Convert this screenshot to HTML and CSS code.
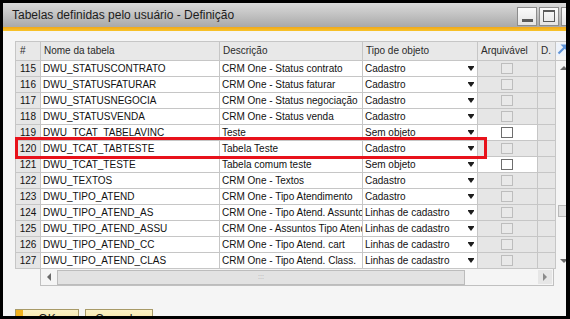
FILE: index.html
```html
<!DOCTYPE html>
<html lang="pt">
<head>
    <meta charset="UTF-8">
    <title>Tabelas definidas pelo usuário - Definição</title>
    <link rel="stylesheet" href="styles.css">
</head>
<body>
    <div class="window">
        <div class="titlebar">
            <span class="title">Tabelas definidas pelo usuário - Definição</span>
            <div class="winbtns">
                <span class="winbtn"><span class="min-glyph"></span></span>
                <span class="winbtn"><span class="max-glyph"></span></span>
                <span class="winbtn close">x</span>
            </div>
        </div>
        <div class="accent"></div>

        <div class="content">
            <div class="gridwrap">
                <div class="grid">
                    <div class="hd">#</div>
                    <div class="hd">Nome da tabela</div>
                    <div class="hd">Descrição</div>
                    <div class="hd">Tipo de objeto</div>
                    <div class="hd">Arquivável</div>
                    <div class="hd">D.</div>
                    <div class="hd expand">
                        <svg width="13" height="13" viewBox="0 0 13 13">
                            <rect x="0" y="0" width="13" height="13" fill="#eef3fa"/>
                            <path d="M2.5 10.5 L9 4" stroke="#5f93d6" stroke-width="2.2" fill="none"/>
                            <path d="M4.5 1.5 H11.5 V8.5 Z" fill="#5f93d6"/>
                        </svg>
                    </div>

                    <div class="vscroll">
                        <span class="tri up"></span>
                        <span class="vthumb"></span>
                        <span class="tri down"></span>
                    </div>

                    <div class="num">115</div><div class="cell">DWU_STATUSCONTRATO</div><div class="cell">CRM One - Status contrato</div><div class="cell type">Cadastro<span class="drop"></span></div><div class="arq"><span class="chk"></span></div><div class="dcol"></div>
                    <div class="num">116</div><div class="cell">DWU_STATUSFATURAR</div><div class="cell">CRM One - Status faturar</div><div class="cell type">Cadastro<span class="drop"></span></div><div class="arq"><span class="chk"></span></div><div class="dcol"></div>
                    <div class="num">117</div><div class="cell">DWU_STATUSNEGOCIA</div><div class="cell">CRM One - Status negociação</div><div class="cell type">Cadastro<span class="drop"></span></div><div class="arq"><span class="chk"></span></div><div class="dcol"></div>
                    <div class="num">118</div><div class="cell">DWU_STATUSVENDA</div><div class="cell">CRM One - Status venda</div><div class="cell type">Cadastro<span class="drop"></span></div><div class="arq"><span class="chk"></span></div><div class="dcol"></div>
                    <div class="num">119</div><div class="cell">DWU_TCAT_TABELAVINC</div><div class="cell">Teste</div><div class="cell type">Sem objeto<span class="drop"></span></div><div class="arq on"><span class="chk"></span></div><div class="dcol"></div>
                    <div class="num">120</div><div class="cell">DWU_TCAT_TABTESTE</div><div class="cell">Tabela Teste</div><div class="cell type">Cadastro<span class="drop"></span></div><div class="arq"><span class="chk"></span></div><div class="dcol"></div>
                    <div class="num">121</div><div class="cell">DWU_TCAT_TESTE</div><div class="cell">Tabela comum teste</div><div class="cell type">Sem objeto<span class="drop"></span></div><div class="arq on"><span class="chk"></span></div><div class="dcol"></div>
                    <div class="num">122</div><div class="cell">DWU_TEXTOS</div><div class="cell">CRM One - Textos</div><div class="cell type">Cadastro<span class="drop"></span></div><div class="arq"><span class="chk"></span></div><div class="dcol"></div>
                    <div class="num">123</div><div class="cell">DWU_TIPO_ATEND</div><div class="cell">CRM One - Tipo Atendimento</div><div class="cell type">Cadastro<span class="drop"></span></div><div class="arq"><span class="chk"></span></div><div class="dcol"></div>
                    <div class="num">124</div><div class="cell">DWU_TIPO_ATEND_AS</div><div class="cell">CRM One - Tipo Atend. Assuntos</div><div class="cell type">Linhas de cadastro<span class="drop"></span></div><div class="arq"><span class="chk"></span></div><div class="dcol"></div>
                    <div class="num">125</div><div class="cell">DWU_TIPO_ATEND_ASSU</div><div class="cell">CRM One - Assuntos Tipo Atend.</div><div class="cell type">Linhas de cadastro<span class="drop"></span></div><div class="arq"><span class="chk"></span></div><div class="dcol"></div>
                    <div class="num">126</div><div class="cell">DWU_TIPO_ATEND_CC</div><div class="cell">CRM One - Tipo Atend. cart</div><div class="cell type">Linhas de cadastro<span class="drop"></span></div><div class="arq"><span class="chk"></span></div><div class="dcol"></div>
                    <div class="num">127</div><div class="cell">DWU_TIPO_ATEND_CLAS</div><div class="cell">CRM One - Tipo Atend. Class.</div><div class="cell type">Linhas de cadastro<span class="drop"></span></div><div class="arq"><span class="chk"></span></div><div class="dcol"></div>
                </div>

                <!-- highlight drawn over row 120 -->
                <div class="mark"></div>

                <div class="hrow">
                    <div class="hscroll">
                        <span class="harrow"><span class="tri left"></span></span>
                        <span class="hthumb"><span class="grip">:::</span></span>
                        <span class="htrack"></span>
                        <span class="harrow right-box"><span class="tri right"></span></span>
                    </div>
                </div>
            </div>

            <div class="footer">
                <button class="btn ok">OK</button>
                <button class="btn">Cancelar</button>
            </div>
        </div>
    </div>
</body>
</html>
```

FILE: styles.css
```css
body {
    margin: 0;
    background-color: #000;
    font-family: "Liberation Sans", Arial, sans-serif;
    color: #111;
}
.window {
    margin: 3px 4px 0 3px;
    height: 313px;
    overflow: hidden;
    background-color: #f5f5f5;
}
.titlebar {
    display: flex;
    align-items: flex-start;
    height: 24px;
    background: linear-gradient(#dadada, #a9a9a9);
}
.title {
    flex: 1;
    padding-left: 9px;
    font-size: 12px;
    line-height: 24px;
    color: #1c1c1c;
    white-space: nowrap;
}
.winbtns {
    display: flex;
    gap: 2px;
    margin-top: 4px;
    margin-right: -15px;
}
.winbtn {
    display: flex;
    justify-content: center;
    width: 20px;
    height: 19px;
    box-sizing: border-box;
    border: 1px solid #8c8c8c;
    background: linear-gradient(#fbfbfb, #e4e4e4);
    font-size: 13px;
    line-height: 16px;
    color: #555;
}
.min-glyph {
    margin-top: 11px;
    width: 11px;
    height: 3px;
    background-color: #5a5a5a;
}
.max-glyph {
    margin-top: 2px;
    width: 12px;
    height: 12px;
    box-sizing: border-box;
    border: 1px solid #5a5a5a;
    border-top-width: 2px;
}
.accent {
    height: 4px;
    background: linear-gradient(#f0a81a, #f8c42a);
}
.content {
    padding: 10px 0 0 12px;
}
.gridwrap {
    position: relative;
}
.grid {
    display: grid;
    grid-template-columns: 25px 179px 143px 115px 60px 18px 16px;
    grid-template-rows: 19px;
    grid-auto-rows: 16px;
    width: max-content;
    border-left: 1px solid #c6c6c6;
    border-top: 1px solid #c6c6c6;
    font-size: 10px;
}
.grid > div {
    box-sizing: border-box;
    border-right: 1px solid #c6c6c6;
    border-bottom: 1px solid #c6c6c6;
    white-space: nowrap;
    overflow: hidden;
}
.hd {
    background-color: #e8e8e8;
    padding: 0 3px;
    line-height: 18px;
    color: #2a2a2a;
}
.hd:first-child {
    padding-left: 4px;
}
.grid > .expand {
    padding: 1px 0 0 0;
    border-right: none;
    background-color: #f5f5f5;
}
.num {
    background-color: #e6e6e6;
    text-align: center;
    line-height: 15px;
}
.cell {
    background-color: #fff;
    padding: 0 2px;
    line-height: 15px;
}
.type {
    display: flex;
    align-items: center;
    justify-content: space-between;
    padding-right: 3px;
}
.drop {
    width: 0;
    height: 0;
    border-left: 3.5px solid transparent;
    border-right: 3.5px solid transparent;
    border-top: 4px solid #1e1e1e;
    box-shadow: 0 -1px 0 #1e1e1e;
}
.arq {
    display: flex;
    justify-content: center;
    align-items: center;
    background-color: #e6e6e6;
}
.arq.on {
    background-color: #fff;
}
.chk {
    width: 12px;
    height: 11px;
    box-sizing: border-box;
    border: 1px solid #bdbdbd;
    background-color: #e9e9e9;
    margin-right: 2px;
}
.arq.on .chk {
    border-color: #6e6e6e;
    background-color: #fff;
}
.dcol {
    background-color: #e6e6e6;
}
.grid > .vscroll {
    grid-column: 7;
    grid-row: 2 / span 13;
    display: flex;
    flex-direction: column;
    align-items: center;
    border-right: none;
    border-bottom: none;
    background-color: #f5f5f5;
}
.tri {
    width: 0;
    height: 0;
}
.tri.up {
    margin-top: 5px;
    border-left: 4px solid transparent;
    border-right: 4px solid transparent;
    border-bottom: 4px solid #6a6a6a;
}
.tri.down {
    margin-top: auto;
    margin-bottom: 6px;
    border-left: 4px solid transparent;
    border-right: 4px solid transparent;
    border-top: 4px solid #6a6a6a;
}
.vthumb {
    margin-top: 135px;
    width: 14px;
    height: 12px;
    box-sizing: border-box;
    border: 1px solid #b9b9b9;
    background-color: #e2e2e2;
    align-self: flex-end;
}
.mark {
    position: absolute;
    left: 0;
    top: 96px;
    width: 472px;
    height: 22px;
    box-sizing: border-box;
    border: 3px solid #e8121b;
}
.hrow {
    padding-left: 25px;
}
.hscroll {
    display: flex;
    align-items: center;
    width: 514px;
    height: 17px;
    box-sizing: border-box;
    border: 1px solid #c0c0c0;
    border-top: none;
    background-color: #f5f5f5;
}
.harrow {
    display: flex;
    justify-content: center;
    align-items: center;
    width: 16px;
    height: 16px;
}
.tri.left {
    border-top: 4px solid transparent;
    border-bottom: 4px solid transparent;
    border-right: 4px solid #6a6a6a;
}
.tri.right {
    border-top: 4px solid transparent;
    border-bottom: 4px solid transparent;
    border-left: 4px solid #8a8a8a;
}
.hthumb {
    display: flex;
    justify-content: center;
    align-items: center;
    width: 408px;
    height: 15px;
    box-sizing: border-box;
    border: 1px solid #bcbcbc;
    background-color: #e2e2e2;
}
.grip {
    font-size: 7px;
    line-height: 8px;
    color: #a8a8a8;
}
.htrack {
    flex: 1;
}
.right-box {
    width: 14px;
    height: 14px;
    margin-right: 1px;
    background-color: #e6e6e6;
}
.footer {
    display: flex;
    gap: 6px;
    margin-top: 23px;
}
.btn {
    width: 64px;
    height: 22px;
    padding: 0;
    border: 1px solid #a89a68;
    background: linear-gradient(#fbf1c6, #f3dc8c);
    font-family: "Liberation Sans", Arial, sans-serif;
    font-size: 12px;
    line-height: 16px;
    color: #1c1c1c;
    align-self: flex-start;
    display: flex;
    justify-content: center;
    align-items: flex-start;
    padding-top: 1px;
}
.btn.ok {
    box-shadow: inset 7px 0 0 #f2b21e;
}
.btn + .btn {
    width: 68px;
}
```
